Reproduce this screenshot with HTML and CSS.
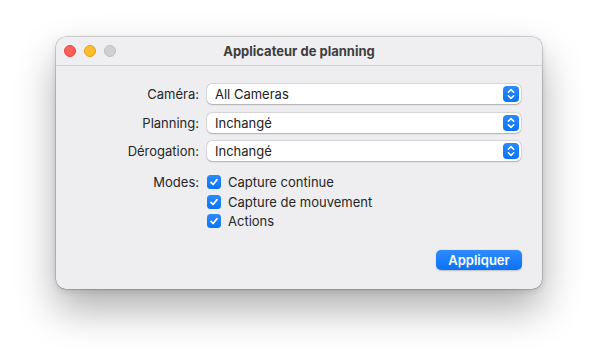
FILE: index.html
```html
<!DOCTYPE html>
<html lang="fr">
<head>
<meta charset="utf-8">
<link rel="stylesheet" href="styles.css">
</head>
<body>
<div class="window">
  <div class="titlebar">
    <div class="lights">
      <span class="light red"></span>
      <span class="light yellow"></span>
      <span class="light gray"></span>
    </div>
    <div class="title">Applicateur de planning</div>
  </div>
  <div class="content">
    <div class="form">
      <label class="label">Caméra:</label>
      <div class="popup"><span class="popup-text">All Cameras</span><span class="stepper"><svg width="8" height="12" viewBox="0 0 8 12"><path d="M1.3 4.3 L4 1.6 L6.7 4.3 M1.3 7.7 L4 10.4 L6.7 7.7" fill="none" stroke="#fff" stroke-width="1.5" stroke-linecap="round" stroke-linejoin="round"/></svg></span></div>
      <label class="label">Planning:</label>
      <div class="popup"><span class="popup-text">Inchangé</span><span class="stepper"><svg width="8" height="12" viewBox="0 0 8 12"><path d="M1.3 4.3 L4 1.6 L6.7 4.3 M1.3 7.7 L4 10.4 L6.7 7.7" fill="none" stroke="#fff" stroke-width="1.5" stroke-linecap="round" stroke-linejoin="round"/></svg></span></div>
      <label class="label">Dérogation:</label>
      <div class="popup"><span class="popup-text">Inchangé</span><span class="stepper"><svg width="8" height="12" viewBox="0 0 8 12"><path d="M1.3 4.3 L4 1.6 L6.7 4.3 M1.3 7.7 L4 10.4 L6.7 7.7" fill="none" stroke="#fff" stroke-width="1.5" stroke-linecap="round" stroke-linejoin="round"/></svg></span></div>
      <label class="label modes-label">Modes:</label>
      <div class="checks">
        <div class="check"><span class="box"><svg width="10" height="10" viewBox="0 0 10 10"><path d="M2 5.3 L4.1 7.5 L8 2.6" fill="none" stroke="#fff" stroke-width="1.7" stroke-linecap="round" stroke-linejoin="round"/></svg></span><span>Capture continue</span></div>
        <div class="check"><span class="box"><svg width="10" height="10" viewBox="0 0 10 10"><path d="M2 5.3 L4.1 7.5 L8 2.6" fill="none" stroke="#fff" stroke-width="1.7" stroke-linecap="round" stroke-linejoin="round"/></svg></span><span>Capture de mouvement</span></div>
        <div class="check"><span class="box"><svg width="10" height="10" viewBox="0 0 10 10"><path d="M2 5.3 L4.1 7.5 L8 2.6" fill="none" stroke="#fff" stroke-width="1.7" stroke-linecap="round" stroke-linejoin="round"/></svg></span><span>Actions</span></div>
      </div>
    </div>
    <div class="actions">
      <button class="primary">Appliquer</button>
    </div>
  </div>
</div>
</body>
</html>
```

FILE: styles.css
```css
html, body {
  margin: 0;
  background: #ffffff;
}
body {
  padding: 37px 0 0 56px;
  min-height: 363px;
  box-sizing: border-box;
  font-family: Inter, "Liberation Sans", sans-serif;
  font-size: 13px;
  color: #262626;
}
.window {
  width: 486px;
  height: 252px;
  box-sizing: border-box;
  background: #eeeef1;
  border-radius: 10px;
  box-shadow: 0 0 0 0.5px rgba(0,0,0,0.3), 0 20px 40px rgba(0,0,0,0.32), 0 2px 6px rgba(0,0,0,0.12);
  overflow: hidden;
  display: flex;
  flex-direction: column;
}
.titlebar {
  height: 28px;
  border-bottom: 1px solid #d3d3d6;
  display: flex;
  align-items: center;
  position: relative;
  background: #efeff2;
}
.lights {
  display: flex;
  gap: 8px;
  padding-left: 8px;
  position: relative;
  z-index: 1;
}
.light {
  width: 12px;
  height: 12px;
  border-radius: 50%;
  box-sizing: border-box;
}
.red { background: #fe5f57; border: 0.5px solid #e2463f; }
.yellow { background: #febc2e; border: 0.5px solid #e1a116; }
.gray { background: #d1d1d3; border: 0.5px solid #bdbdc0; }
.title {
  position: absolute;
  left: 0;
  right: 0;
  text-align: center;
  font-weight: 700;
  font-size: 13px;
  color: #3d3d3d;
}
.content {
  flex: 1;
  padding: 18px 21px 19px 8px;
  display: flex;
  flex-direction: column;
  justify-content: space-between;
}
.form {
  display: grid;
  grid-template-columns: 135px 1fr;
  column-gap: 8px;
  row-gap: 8.5px;
  align-items: center;
}
.label {
  text-align: right;
  color: #262626;
}
.modes-label {
  align-self: start;
  margin-top: 3px;
  line-height: 19.5px;
}
.popup {
  height: 20px;
  background: #ffffff;
  border-radius: 5px;
  box-shadow: 0 0 0 0.5px rgba(0,0,0,0.12), 0 0.5px 1.5px rgba(0,0,0,0.22);
  display: flex;
  align-items: center;
  justify-content: space-between;
  padding: 0 2px 0 8px;
}
.popup-text {
  color: #222;
}
.stepper {
  width: 16px;
  height: 16px;
  border-radius: 4px;
  background: linear-gradient(#2b8aff, #0a74f8);
  display: flex;
  align-items: center;
  justify-content: center;
}
.checks {
  display: flex;
  flex-direction: column;
  margin-top: 3px;
}
.check {
  display: flex;
  align-items: center;
  gap: 7px;
  height: 19.5px;
}
.box {
  width: 14px;
  height: 14px;
  border-radius: 3.5px;
  background: linear-gradient(#2b8aff, #0a74f8);
  display: flex;
  align-items: center;
  justify-content: center;
}
.actions {
  display: flex;
  justify-content: flex-end;
  margin-right: -1px;
}
.primary {
  width: 86px;
  height: 20px;
  border: none;
  border-radius: 5px;
  background: linear-gradient(#2e8cff, #0a72f7);
  color: #ffffff;
  font-family: Inter, "Liberation Sans", sans-serif;
  font-size: 13px;
  font-weight: 600;
  padding: 0;
  box-shadow: 0 0.5px 1.5px rgba(0,0,0,0.2);
}
```
